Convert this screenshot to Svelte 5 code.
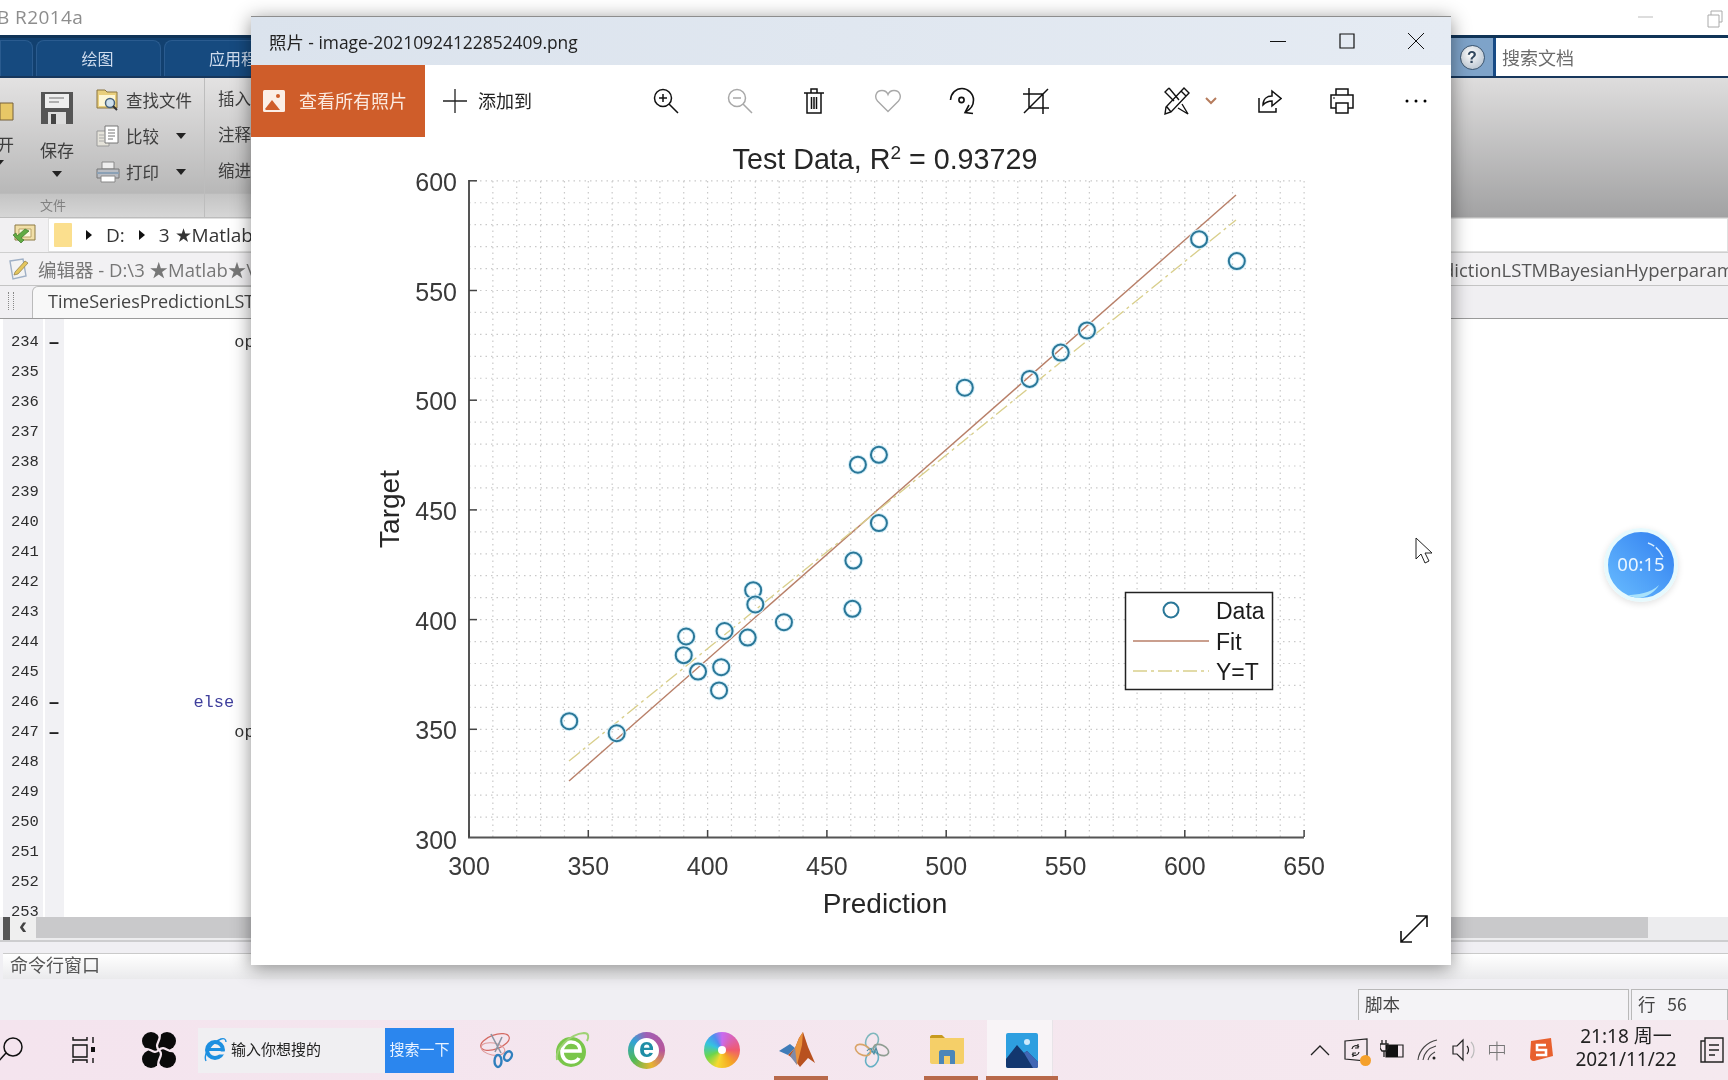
<script>
  // plot geometry, screen px of the photo
  const sx = (v) => 469 + (v - 300) * 2.386;
  const sy = (v) => 839 - (v - 300) * 2.194;

  const xMajor = [300, 350, 400, 450, 500, 550, 600, 650];
  const yMajor = [300, 350, 400, 450, 500, 550, 600];
  const xGrid = Array.from({ length: 35 }, (_, i) => 310 + i * 10);
  const yGrid = Array.from({ length: 30 }, (_, i) => 310 + i * 10);

  const points = [
    [342, 353.7], [361.9, 348.2], [390, 383.8], [391, 392.3], [396, 376.3], [404.8, 367.7],
    [405.7, 378.3], [407.1, 394.8], [416.8, 391.8], [419.1, 413.4], [420, 406.9], [432, 398.8],
    [460.7, 404.9], [461.1, 426.9], [471.8, 444], [463, 470.6], [471.8, 475.1], [507.8, 505.7],
    [535, 509.7], [548, 521.7], [559, 531.8], [606, 573.4], [621.8, 563.4]
  ];

  const lineNos = Array.from({ length: 20 }, (_, i) => 234 + i);
  const code = { 234: '                op', 246: '            else', 247: '                op' };
  const dashes = [234, 246, 247];
</script>

<div class="screen">
  <!-- matlab behind -->
  <div class="titlebar">
    <span class="apptitle">B R2014a</span>
    <svg class="minmax" width="90" height="20" viewBox="0 0 90 20">
      <path d="M2 9h15" stroke="#bbb" fill="none" />
      <path d="M72 7h11v12h-11zM75 7v-4h11v11h-3" stroke="#aaa" fill="none" />
    </svg>
  </div>

  <div class="tabs">
    <div class="tab first"></div>
    <div class="tab">绘图</div>
    <div class="tab wide">应用程序</div>
    <div class="help"><span class="helpball">?</span></div>
    <div class="docsearch">搜索文档</div>
  </div>

  <div class="ribbon">
    <div class="rgroup">
      <div class="rbody">
        <div class="opencol">
          <svg width="14" height="22" viewBox="0 0 14 22"><path d="M0 3h13v17H0z" fill="#e7c766" stroke="#77613a" /></svg>
          <span class="openlabel">开</span>
          <span class="caret cut"></span>
        </div>
        <div class="savecol">
          <svg width="34" height="34" viewBox="0 0 34 34">
            <path d="M1 1h32v32H1z" fill="#555" />
            <path d="M5 3h24v14H5z" fill="#eee" />
            <path d="M9 7h15M9 11h10" stroke="#999" stroke-width="1.5" />
            <path d="M8 21h18v12H8z" fill="#ddd" />
            <path d="M11 23h5v10h-5z" fill="#444" />
          </svg>
          <span>保存</span>
          <span class="caret"></span>
        </div>
        <div class="smallcol">
          <div class="smallitem">
            <svg width="24" height="24" viewBox="0 0 24 24">
              <path d="M1 2h8l2 2h10v16H1z" fill="#e9cf7c" stroke="#8a7440" />
              <path d="M3 7h16v11H3z" fill="#fdf6d6" />
              <circle cx="14" cy="15" r="4.5" fill="#cfe0ec" stroke="#48627a" stroke-width="1.5" />
              <path d="M17 18l4 4" stroke="#333" stroke-width="2" />
            </svg>
            <span>查找文件</span>
          </div>
          <div class="smallitem">
            <svg width="24" height="24" viewBox="0 0 24 24">
              <path d="M1 7h12v15H1z" fill="#e5e3da" stroke="#999" />
              <path d="M9 2h13v17H9z" fill="#fff" stroke="#777" />
              <path d="M12 6h7M12 9h7M12 12h7M12 15h5" stroke="#777" />
              <path d="M3 11h6M3 14h6M3 17h6" stroke="#aaa" />
            </svg>
            <span>比较</span><span class="caret side"></span>
          </div>
          <div class="smallitem">
            <svg width="24" height="24" viewBox="0 0 24 24">
              <path d="M6 2h12v7H6z" fill="#eee" stroke="#888" />
              <path d="M1 9h22v9H1z" fill="#b9bcc2" stroke="#777" />
              <path d="M5 16h14v6H5z" fill="#fff" stroke="#888" />
              <path d="M1 13h22" stroke="#8aa0b5" stroke-width="2" />
            </svg>
            <span>打印</span><span class="caret side"></span>
          </div>
        </div>
      </div>
      <div class="rlabel">文件</div>
    </div>
    <div class="rgroup second">
      <div class="rbody textcol">
        <span>插入</span>
        <span>注释</span>
        <span>缩进</span>
      </div>
      <div class="rlabel"></div>
    </div>
  </div>

  <div class="pathbar">
    <div class="pathtools">
      <svg width="26" height="24" viewBox="0 0 26 24">
        <path d="M4 3h20v15H4z" fill="#f1dfa8" stroke="#8d7a45" />
        <path d="M8 7h12v8H8z" fill="#fff8de" stroke="#b9a468" />
        <path d="M2 13l8 8 3-3-3-2 8-7-4-2-8 7-1-3z" fill="#62ab43" stroke="#3c7a2a" stroke-width=".7" />
      </svg>
    </div>
    <div class="pathbox">
      <span class="crumbfolder"></span>
      <span class="tri"></span><span>D:</span>
      <span class="tri"></span><span>3 ★Matlab★</span>
    </div>
  </div>

  <div class="edhead">
    <svg width="22" height="24" viewBox="0 0 22 24">
      <path d="M2 4l13-2 3 17-13 3z" fill="#f3f3f3" stroke="#9fb0c6" stroke-width="1.4" />
      <path d="M7 15l10-11 3 2-10 11-4 1z" fill="#e4c65e" stroke="#8d7a45" stroke-width=".7" />
    </svg>
    <span class="edtitle">编辑器 - D:\3 ★Matlab★\</span>
    <span class="edtail">dictionLSTMBayesianHyperparameterOptimization.m</span>
  </div>

  <div class="edtabs">
    <span class="grip"></span>
    <div class="edtab">TimeSeriesPredictionLSTMBayesianHyperparam.m</div>
  </div>

  <div class="editor">
    {#each lineNos as n}
      <div class="line">
        <span class="num">{n}</span>
        <span class="dash">{dashes.includes(n) ? '–' : ''}</span>
        <span class="code" class:kw={n === 246}>{code[n] ?? ''}</span>
      </div>
    {/each}
  </div>

  <div class="hscroll">
    <span class="hgrip"></span>
    <span class="harrow">‹</span>
    <span class="hthumb"></span>
  </div>

  <div class="cmdhead">命令行窗口</div>

  <div class="statusrow">
    <div class="statbox script">脚本</div>
    <div class="statbox row">行&nbsp;&nbsp;&nbsp;56</div>
  </div>

  <!-- windows taskbar -->
  <div class="taskbar">
    <svg class="tb-search" width="26" height="30" viewBox="0 0 26 30">
      <circle cx="13" cy="12" r="9" fill="none" stroke="#111" stroke-width="1.5" />
      <path d="M6 18L-4 29" stroke="#111" stroke-width="1.5" />
    </svg>
    <svg class="tb-view" width="24" height="28" viewBox="0 0 24 28">
      <path d="M1 1v3h14V1M1 9h14v12H1zM1 27v-3h14v3M21 1v6M21 22v5" fill="none" stroke="#111" stroke-width="1.4" />
      <rect x="19" y="11" width="4" height="5" fill="#111" />
    </svg>
    <svg class="tb-fan" width="34" height="36" viewBox="0 0 34 36">
      <circle cx="9" cy="9" r="9" /><circle cx="25" cy="9" r="9" />
      <circle cx="25" cy="27" r="9" /><circle cx="9" cy="27" r="9" />
      <rect x="6" y="6" width="22" height="24" />
      <g fill="none" stroke="#f4e4ee" stroke-width="2.2">
        <path d="M17 18C11 12 21 8 17 0" />
        <path d="M17 18C23 12 27 23 34 18" />
        <path d="M17 18C23 24 13 28 17 36" />
        <path d="M17 18C11 24 7 13 0 18" />
      </g>
    </svg>

    <div class="ie-box">
      <svg width="24" height="26" viewBox="0 0 24 26">
        <circle cx="12" cy="13" r="8" fill="none" stroke="#1c8fe0" stroke-width="4" />
        <path d="M4 12.5h17" stroke="#1c8fe0" stroke-width="3" />
        <path d="M14 17.5h10v-3h-10z" fill="#f0eff2" />
        <path d="M3 24C0 18 8 6 18 2c3-1 5 0 5 3" fill="none" stroke="#1c8fe0" stroke-width="1.4" />
      </svg>
      <span class="ie-hint">输入你想搜的</span>
      <span class="ie-btn"><span>搜索一下</span></span>
    </div>

    <div class="apps">
      <div class="app">
        <svg width="36" height="38" viewBox="0 0 36 38">
          <ellipse cx="16" cy="11" rx="15" ry="7" transform="rotate(-20 16 11)" fill="none" stroke="#d46a63" stroke-width="1.2" />
          <ellipse cx="14" cy="18" rx="12" ry="6" transform="rotate(10 14 18)" fill="none" stroke="#d99" stroke-width="1" />
          <path d="M12 3l10 19M23 6l-7 15" stroke="#8c95a3" stroke-width="1.6" />
          <ellipse cx="19" cy="30" rx="3.5" ry="6" fill="none" stroke="#2f7fbd" stroke-width="2.4" />
          <ellipse cx="29" cy="25" rx="3.5" ry="5" transform="rotate(30 29 25)" fill="none" stroke="#2f7fbd" stroke-width="2.4" />
        </svg>
      </div>
      <div class="app">
        <svg width="36" height="38" viewBox="0 0 36 38">
          <circle cx="17" cy="21" r="15" fill="#7ac64a" />
          <path d="M8 20h18c0-6-4-9-9-9s-9 4-9 10 4 10 9 10c4 0 7-2 8-4" fill="none" stroke="#fff" stroke-width="3.6" />
          <path d="M3 29C1 18 16 3 30 2c5 0 5 4 3 8" fill="none" stroke="#9fd274" stroke-width="2" />
        </svg>
      </div>
      <div class="app"><div class="ring"><span class="ringin">e</span></div></div>
      <div class="app"><div class="pinwheel"><span></span></div></div>
      <div class="app">
        <svg width="38" height="38" viewBox="0 0 38 38">
          <path d="M1 20l11-7 5 4-7 7z" fill="#3f7cb8" />
          <path d="M10 24l7-7 4-10 4-6 5 15 7 16-7-5-8 9-6-8z" fill="#b8511f" />
          <path d="M17 17l4-10 4-6-1 13-5 20-6-10z" fill="#e8913c" />
          <path d="M12 25l5-8 2 17z" fill="#7f8aa8" />
        </svg>
      </div>
      <div class="app">
        <svg width="36" height="36" viewBox="0 0 36 36" fill="none" stroke-width="1.6">
          <ellipse cx="18" cy="9" rx="6" ry="8" stroke="#7fb7bd" transform="rotate(25 18 9)" />
          <ellipse cx="27" cy="18" rx="8" ry="5" stroke="#8f9d92" transform="rotate(25 27 18)" />
          <ellipse cx="18" cy="27" rx="6" ry="8" stroke="#66b0c4" transform="rotate(25 18 27)" />
          <ellipse cx="9" cy="18" rx="8" ry="5" stroke="#d9a468" transform="rotate(25 9 18)" />
          <path d="M13 19c2-3 5-3 5 0l2 3 2-6 2 6" stroke="#4b8ba0" stroke-width="1.2" />
        </svg>
      </div>
      <div class="app">
        <svg width="36" height="30" viewBox="0 0 36 30">
          <path d="M1 2c0-1 1-2 2-2h10l3 3h-15z" fill="#c79a1f" />
          <path d="M1 3h34v24c0 1-1 2-2 2H3c-1 0-2-1-2-2z" fill="#f5cf68" />
          <path d="M10 29V17c0-1 1-2 2-2h12c1 0 2 1 2 2v12h-5v-8h-6v8z" fill="#4b86b8" />
        </svg>
      </div>
      <div class="app active">
        <svg width="32" height="35" viewBox="0 0 32 35">
          <rect width="32" height="35" rx="2" fill="#2e9fe0" />
          <circle cx="21" cy="9" r="3" fill="#cfeafc" />
          <path d="M0 33V26L11 12l7 8 3-2 11 11v4c0 1-1 2-2 2H2c-1 0-2-1-2-2z" fill="#13376f" />
          <path d="M18 20l3-2 11 11v4c0 1-1 2-2 2h-3z" fill="#4166b4" />
        </svg>
      </div>
    </div>

    <div class="tray">
      <div class="tr">
        <svg width="20" height="12" viewBox="0 0 20 12"><path d="M1 11l9-9 9 9" fill="none" stroke="#222" stroke-width="1.3" /></svg>
      </div>
      <div class="tr badge">
        <svg width="24" height="24" viewBox="0 0 24 24" fill="none" stroke="#222" stroke-width="1.2">
          <path d="M1 3l22-2v22l-22-2z" />
          <path d="M8 11a4 4 0 0 1 7-2M15 14a4 4 0 0 1-7 2M14 6v4h-3M9 19v-4h3" />
        </svg>
        <span class="dot"></span>
      </div>
      <div class="tr">
        <svg width="24" height="20" viewBox="0 0 24 20">
          <path d="M6 5h17v12H6z" fill="none" stroke="#222" stroke-width="1.2" />
          <path d="M6 5h12v12H6z" fill="#111" />
          <path d="M2 0v4M6 0v4M0 4h8v4l-2 3h-4l-2-3zM4 11v6" fill="none" stroke="#222" stroke-width="1.3" />
        </svg>
      </div>
      <div class="tr">
        <svg width="22" height="22" viewBox="0 0 22 22" fill="none" stroke="#444" stroke-width="1.1">
          <path d="M1 21C2 11 10 3 20 1M6 21c1-7 6-12 13-14M11 21c1-4 3-6 7-8" />
          <circle cx="17" cy="19" r="1.5" fill="#222" stroke="none" />
        </svg>
      </div>
      <div class="tr">
        <svg width="24" height="24" viewBox="0 0 24 24" fill="none" stroke="#222" stroke-width="1.2">
          <path d="M1 8h4l6-6v20l-6-6H1z" />
          <path d="M15 8c2 2 2 6 0 8" />
          <path d="M19 4c4 4 4 12 0 16" stroke="#bbb" />
        </svg>
      </div>
      <div class="tr ime">中</div>
      <div class="tr sogou">
        <svg width="26" height="26" viewBox="0 0 26 26">
          <path d="M3 4l20-3 2 18-19 5c-3 0-4-2-4-4z" fill="#e8602e" />
          <path d="M18 8H9v5h9v5H8" fill="none" stroke="#fff" stroke-width="2.6" />
        </svg>
      </div>
      <div class="clock">
        <span>21:18 周一</span>
        <span>2021/11/22</span>
      </div>
      <svg class="notify" width="24" height="26" viewBox="0 0 24 26" fill="none" stroke="#222" stroke-width="1.4">
        <path d="M5 1h18v24H5zM5 4H1v21h4M9 8h10M9 13h10M9 18h6" />
      </svg>
    </div>
  </div>

  <!-- photos window sits over matlab -->
  <div class="photos">
    <div class="ph-title">
      <span class="ph-name">照片 - image-20210924122852409.png</span>
      <div class="ph-winbtn">
        <svg width="16" height="16" viewBox="0 0 16 16"><path d="M0 8.5h16" stroke="#111" /></svg>
      </div>
      <div class="ph-winbtn">
        <svg width="16" height="16" viewBox="0 0 16 16"><path d="M1 1h14v14H1z" fill="none" stroke="#111" stroke-width="1.2" /></svg>
      </div>
      <div class="ph-winbtn">
        <svg width="16" height="16" viewBox="0 0 16 16"><path d="M0 0l16 16M16 0L0 16" stroke="#111" /></svg>
      </div>
    </div>

    <div class="ph-tools">
      <div class="ph-all">
        <svg width="22" height="22" viewBox="0 0 22 22">
          <rect width="22" height="22" rx="1.5" fill="#fbeee6" />
          <path d="M2 19l7-9 8 10H3z" fill="#cf5d2a" />
          <circle cx="15" cy="6" r="2" fill="#cf5d2a" />
        </svg>
        <span>查看所有照片</span>
      </div>
      <div class="ph-add">
        <svg width="24" height="24" viewBox="0 0 24 24"><path d="M12 0v24M0 12h24" stroke="#222" stroke-width="1.3" /></svg>
        <span>添加到</span>
      </div>

      <div class="ph-group">
        <button aria-label="放大">
          <svg width="26" height="26" viewBox="0 0 26 26" fill="none" stroke="#111" stroke-width="1.5">
            <circle cx="10" cy="10" r="8.5" /><path d="M16 16l9 9M6 10h8M10 6v8" />
          </svg>
        </button>
        <button aria-label="缩小">
          <svg width="26" height="26" viewBox="0 0 26 26" fill="none" stroke="#a8a8a8" stroke-width="1.5">
            <circle cx="10" cy="10" r="8.5" /><path d="M16 16l9 9M6 10h8" />
          </svg>
        </button>
        <button aria-label="删除">
          <svg width="20" height="26" viewBox="0 0 20 26" fill="none" stroke="#111" stroke-width="1.5">
            <path d="M0 5h20M7 5V1h6v4M3 5v20h14V5M7.5 9v12M10 9v12M12.5 9v12" />
          </svg>
        </button>
        <button aria-label="收藏">
          <svg width="26" height="24" viewBox="0 0 26 24" fill="none" stroke="#a8a8a8" stroke-width="1.4">
            <path d="M13 22.5L2.5 12C-1 8 1 1.5 7 1.5c3 0 5 1.5 6 4 1-2.5 3-4 6-4 6 0 8 6.5 4.5 10.5z" />
          </svg>
        </button>
        <button aria-label="旋转">
          <svg width="26" height="28" viewBox="0 0 26 28" fill="none" stroke="#111" stroke-width="1.6">
            <path d="M1.5 13C2 6 7 1.5 13 1.5S24.5 6.5 24.5 13c0 6-4 10-8 12" />
            <circle cx="12.5" cy="13" r="2.6" />
            <path d="M20 18l-4 7.5 8 1" />
          </svg>
        </button>
        <button aria-label="裁剪">
          <svg width="26" height="26" viewBox="0 0 26 26" fill="none" stroke="#111" stroke-width="1.5">
            <path d="M0 6h20v20M6 0v20h20M1 25L25 1" />
          </svg>
        </button>
      </div>

      <div class="ph-right">
        <div class="ph-edit">
          <svg width="26" height="28" viewBox="0 0 26 28" fill="none" stroke="#111" stroke-width="1.4">
            <path d="M5 1L1 5l9 9M15 13L5 1M18 17l6 10-10-6" />
            <path d="M20 1l5 5L7 25l-6 2 1-7zM3 20l4 5M17 4l5 5" />
          </svg>
          <svg width="14" height="10" viewBox="0 0 14 10"><path d="M2 2l5 5 5-5" fill="none" stroke="#b67c5d" stroke-width="2" /></svg>
        </div>
        <button class="share" aria-label="分享">
          <svg width="24" height="26" viewBox="0 0 24 26" fill="none" stroke="#111" stroke-width="1.5">
            <path d="M1 10v14h17v-4" />
            <path d="M5 17c0-6 4-9 9-9V3l9 7.5-9 7.5v-5c-4 0-6 1-9 4z" />
          </svg>
        </button>
        <button aria-label="打印">
          <svg width="24" height="26" viewBox="0 0 24 26" fill="none" stroke="#111" stroke-width="1.5">
            <path d="M6 7V1h12v6M6 20H1V7h22v13h-5M6 15h12v10H6z" />
            <path d="M3.5 10h1" stroke-width="2" />
          </svg>
        </button>
        <button aria-label="更多">
          <svg width="24" height="6" viewBox="0 0 24 6"><circle cx="3" cy="3" r="1.5" /><circle cx="12" cy="3" r="1.5" /><circle cx="21" cy="3" r="1.5" /></svg>
        </button>
      </div>
    </div>

    <div class="ph-view">
      <svg class="plot" width="1200" height="828" viewBox="251 137 1200 828">
        <g stroke="#c9c9c9" stroke-dasharray="1.5 4" stroke-width="1.2">
          {#each xGrid as v}
            <line x1={sx(v)} y1="181" x2={sx(v)} y2="837" />
          {/each}
          {#each yGrid as v}
            <line x1="469" y1={sy(v)} x2="1304" y2={sy(v)} />
          {/each}
        </g>

        <line x1="569" y1="781" x2="1236" y2="195" stroke="#b87f68" stroke-width="1.4" />
        <line x1="569" y1="761" x2="1236" y2="220" stroke="#d9cf8c" stroke-width="1.4" stroke-dasharray="14 4 3 4" />

        {#each points as p}
          <circle cx={sx(p[0])} cy={sy(p[1])} r="8" fill="none" stroke="#d5eef8" stroke-width="4" />
          <circle cx={sx(p[0])} cy={sy(p[1])} r="8" fill="none" stroke="#2a7798" stroke-width="2" />
        {/each}

        <path d="M469 180v657.500h835" fill="none" stroke="#555" stroke-width="2" />
        <g stroke="#444" stroke-width="1.5">
          {#each xMajor as v}
            <line x1={sx(v)} y1="837" x2={sx(v)} y2="830" />
          {/each}
          {#each yMajor.slice(1) as v}
            <line x1="469" y1={sy(v)} x2="477" y2={sy(v)} />
          {/each}
        </g>

        <g class="ticks">
          {#each xMajor as v}
            <text x={sx(v)} y="875" text-anchor="middle">{v}</text>
          {/each}
          {#each yMajor as v}
            <text x="457" y={sy(v) + 10} text-anchor="end">{v}</text>
          {/each}
        </g>

        <text class="label title" x="885" y="169" text-anchor="middle">Test Data, R<tspan dy="-10" font-size="19">2</tspan><tspan dy="10">&nbsp;= 0.93729</tspan></text>
        <text class="label" x="885" y="913" text-anchor="middle">Prediction</text>
        <text class="label" transform="translate(399 509) rotate(-90)" text-anchor="middle">Target</text>

        <rect x="1125.5" y="592.5" width="147" height="97" fill="#fff" stroke="#222" stroke-width="1.5" />
        <circle cx="1171" cy="610" r="7.5" fill="none" stroke="#2a7798" stroke-width="2" />
        <line x1="1133" y1="641" x2="1209" y2="641" stroke="#b87f68" stroke-width="1.4" />
        <line x1="1133" y1="671" x2="1209" y2="671" stroke="#d9cf8c" stroke-width="1.4" stroke-dasharray="14 4 3 4" />
        <g class="legend">
          <text x="1216" y="619">Data</text>
          <text x="1216" y="650">Fit</text>
          <text x="1216" y="680">Y=T</text>
        </g>
      </svg>

      <svg class="expand" width="30" height="30" viewBox="0 0 30 30" fill="none" stroke="#111" stroke-width="1.6">
        <path d="M2 28L28 2M17 2h11v11M2 17v11h11" />
      </svg>
    </div>
  </div>

  <!-- recorder timer -->
  <div class="timer">
    <svg class="timerfx" width="68" height="68" viewBox="0 0 68 68" fill="none">
      <path d="M41 12c6 2 11 6 15 14" stroke="#d8eeff" stroke-width="1.4" stroke-dasharray="7 2 20" />
      <path d="M20 64c10 0 24-2 32-10-3 6-12 13-22 13z" fill="#a8e2fb" stroke="none" />
    </svg>
    <span>00:15</span>
  </div>

  <svg class="cursor" width="20" height="28" viewBox="0 0 20 28">
    <path d="M1 1v21l5-5 4 9 4-2-4-8h7z" fill="#fff" stroke="#222" stroke-width="1" />
  </svg>
</div>

<style>
  :global(body) {
    background: #f0eff3;
  }

  .screen {
    position: relative;
    width: 1728px;
    height: 1080px;
    overflow: hidden;
    display: flex;
    flex-direction: column;
    background: #f0eff3;
    font-family: "Noto Sans CJK SC", "Noto Sans", sans-serif;
    color: #444;
    filter: blur(.35px);
  }

  svg {
    display: block;
    flex: none;
  }

  .titlebar {
    height: 35px;
    background: #fff;
    display: flex;
    align-items: center;
    flex: none;
  }
  .apptitle {
    margin-left: -3px;
    padding-bottom: 2px;
    font: 19px "Open Sans", sans-serif;
    color: #8d8d8d;
    letter-spacing: .4px;
  }
  .minmax {
    margin-left: auto;
    margin-right: 2px;
  }

  .tabs {
    height: 43px;
    flex: none;
    display: flex;
    background: #12406f;
    border-top: 3px solid #103457;
    border-bottom: 2px solid #17375c;
    box-sizing: border-box;
  }
  .tab {
    width: 125px;
    margin-right: 3px;
    margin-top: 2px;
    padding: 0 2px 2px 0;
    border-radius: 8px 8px 0 0;
    border: 1px solid #2a5b8f;
    border-bottom: 0;
    background: #164a7f;
    color: #cfdcee;
    font-size: 16px;
    display: flex;
    align-items: center;
    justify-content: center;
    box-sizing: border-box;
  }
  .tab.first {
    width: 33px;
    border-radius: 0 8px 0 0;
  }
  .tab.wide {
    width: 130px;
    justify-content: flex-start;
    padding-left: 44px;
    white-space: nowrap;
  }
  .help {
    margin-left: auto;
    width: 45px;
    background: #7ea3c9;
    border-right: 3px solid #174a85;
    box-sizing: border-box;
    display: flex;
    align-items: center;
    justify-content: center;
  }
  .helpball {
    width: 23px;
    height: 23px;
    border-radius: 50%;
    background: radial-gradient(circle at 40% 35%, #fff, #a9b7c6);
    border: 1.5px solid #3b556f;
    color: #31475e;
    font: bold 16px/23px "Liberation Sans", sans-serif;
    text-align: center;
  }
  .docsearch {
    width: 232px;
    box-sizing: border-box;
    background: #fff;
    font-size: 18px;
    color: #6b6b6b;
    padding-left: 6px;
    display: flex;
    align-items: center;
  }

  .ribbon {
    height: 140px;
    flex: none;
    display: flex;
    background: linear-gradient(#dedddd, #a2a2a3);
    border-bottom: 1px solid #bcbcbc;
    box-sizing: border-box;
  }
  .rgroup {
    width: 205px;
    flex: none;
    display: flex;
    flex-direction: column;
    border-right: 1px solid #bdbdbd;
    box-sizing: border-box;
    background: linear-gradient(#e3e2e2, #afafaf);
  }
  .rgroup.second {
    width: 230px;
  }
  .rbody {
    flex: 1;
    display: flex;
    min-height: 0;
    font-size: 16.5px;
    color: #3e3e3e;
  }
  .rlabel {
    height: 23px;
    padding-left: 40px;
    background: linear-gradient(#c4c4c4, #d6d6d6);
    border-top: 1px solid #bbb;
    font-size: 13px;
    line-height: 22px;
    color: #808080;
  }
  .opencol {
    width: 14px;
    padding-top: 22px;
    display: flex;
    flex-direction: column;
    gap: 11px;
    overflow: hidden;
    font-size: 17px;
  }
  .openlabel {
    margin-left: -3px;
    line-height: 22px;
  }
  .savecol {
    margin-left: 19px;
    width: 48px;
    padding-top: 13px;
    display: flex;
    flex-direction: column;
    align-items: center;
    font-size: 17px;
  }
  .savecol span:nth-child(2) {
    margin-top: 12px;
    line-height: 26px;
  }
  .caret {
    display: block;
    width: 0;
    height: 0;
    border: 5.5px solid transparent;
    border-top: 6px solid #222;
    border-bottom: 0;
    margin-top: 8px;
  }
  .caret.cut {
    margin: -6px 0 0 -6px;
  }
  .caret.side {
    margin: 0 6px 0 auto;
  }
  .smallcol {
    margin-left: 15px;
    width: 96px;
    padding-top: 9px;
    display: flex;
    flex-direction: column;
    gap: 10px;
  }
  .smallitem {
    height: 26px;
    display: flex;
    align-items: center;
    gap: 6px;
    white-space: nowrap;
  }
  .textcol {
    flex-direction: column;
    padding: 8px 0 0 13px;
    gap: 12px;
    line-height: 24px;
  }

  .pathbar {
    height: 35px;
    flex: none;
    display: flex;
    background: #f1f0f2;
    box-sizing: border-box;
    border-bottom: 1px solid #cfcfcf;
  }
  .pathtools {
    width: 48px;
    padding: 4px 0 0 11px;
    box-sizing: border-box;
  }
  .pathbox {
    flex: 1;
    background: #fff;
    border: 1px solid #e0e0e0;
    display: flex;
    align-items: center;
    gap: 14px;
    padding-left: 5px;
    font: 19px "Open Sans", sans-serif;
    color: #333;
  }
  .crumbfolder {
    width: 18px;
    height: 24px;
    background: #fbdf8e;
    border-radius: 1px;
  }
  .tri {
    width: 0;
    height: 0;
    border-left: 6px solid #111;
    border-top: 5px solid transparent;
    border-bottom: 5px solid transparent;
  }

  .edhead {
    height: 32px;
    flex: none;
    display: flex;
    align-items: center;
    padding-left: 8px;
    background: #f2f1f3;
    font-size: 18px;
    color: #777;
    white-space: nowrap;
    overflow: hidden;
    box-sizing: border-box;
  }
  .edtitle {
    margin-left: 8px;
    width: 1405px;
    flex: none;
    font-family: "Open Sans", "Noto Sans CJK SC", sans-serif;
    font-size: 18.5px;
  }
  .edtail {
    color: #555;
    font-family: "Open Sans", sans-serif;
    font-size: 18.5px;
  }

  .edtabs {
    height: 34px;
    flex: none;
    display: flex;
    background: #f0eff2;
    border-top: 1px solid #c4c4c4;
    border-bottom: 1px solid #9a9a9a;
    box-sizing: border-box;
    overflow: hidden;
  }
  .grip {
    width: 4px;
    margin: 6px 18px 8px 8px;
    border-left: 1px dotted #888;
    border-right: 1px dotted #888;
  }
  .edtab {
    width: 600px;
    padding-left: 15px;
    background: #f8f8f8;
    border: 1px solid #bbb;
    border-radius: 6px 0 0 0;
    border-bottom: 0;
    font: 18px "Open Sans", sans-serif;
    color: #444;
    line-height: 29px;
    white-space: nowrap;
    overflow: hidden;
  }

  .editor {
    height: 598px;
    flex: none;
    overflow: hidden;
    padding-top: 8px;
    box-sizing: border-box;
    background: linear-gradient(90deg, #fff 3px, #f1f1f4 3px, #f1f1f4 43px, #fff 43px, #fff 45px, #f1f1f4 45px, #f1f1f4 64px, #fff 64px);
    font-family: "Liberation Mono", monospace;
  }
  .line {
    height: 30px;
    flex: none;
    display: flex;
    align-items: center;
  }
  .num {
    margin-left: 11px;
    width: 35px;
    font-size: 15.5px;
    color: #2c2c2c;
  }
  .dash {
    width: 25px;
    font: bold 18px "Liberation Sans", sans-serif;
    padding-left: 3px;
    box-sizing: border-box;
    color: #222;
  }
  .code {
    white-space: pre;
    font-size: 17px;
    color: #333;
  }
  .code.kw {
    color: #3f3f9c;
  }

  .hscroll {
    height: 25px;
    flex: none;
    display: flex;
    background: #ececee;
    padding-left: 3px;
    border-bottom: 2px solid #cdcdcf;
    box-sizing: border-box;
  }
  .hgrip {
    width: 7px;
    background: #555;
  }
  .harrow {
    width: 26px;
    background: #efefef;
    text-align: center;
    font: bold 24px/18px "Liberation Sans", sans-serif;
    color: #444;
  }
  .hthumb {
    width: 1612px;
    background: #c9c9cb;
    margin-bottom: 2px;
  }

  .cmdhead {
    height: 25px;
    flex: none;
    margin-top: 11px;
    margin-left: 3px;
    padding-left: 7px;
    border-top: 1px solid #cacaca;
    background: linear-gradient(#fff, #eaeaec);
    font-size: 18px;
    line-height: 21px;
    color: #555;
  }

  .statusrow {
    flex: 1;
    display: flex;
    align-items: flex-end;
    padding-left: 1358px;
    gap: 2px;
  }
  .statbox {
    height: 31px;
    border: 1px solid #b9b9b9;
    border-bottom: 0;
    box-sizing: border-box;
    font-size: 17.5px;
    line-height: 27px;
    color: #444;
    padding-left: 6px;
    background: #f4f3f6;
  }
  .statbox.script {
    width: 271px;
  }
  .statbox.row {
    flex: 1;
    white-space: nowrap;
  }

  .taskbar {
    height: 60px;
    flex: none;
    display: flex;
    align-items: center;
    background: linear-gradient(90deg, #f4e4ee, #f5e9ef);
  }
  .tb-search {
    overflow: visible;
  }
  .tb-view {
    margin-left: 46px;
  }
  .tb-fan {
    margin-left: 46px;
    fill: #0a0a0a;
  }
  .ie-box {
    margin-left: 22px;
    width: 256px;
    height: 45px;
    flex: none;
    display: flex;
    align-items: center;
    background: #f0eff2;
    font-size: 15px;
    color: #222;
    padding-left: 5px;
    box-sizing: border-box;
    overflow: hidden;
  }
  .ie-hint {
    margin-left: 4px;
    width: 154px;
    padding-bottom: 3px;
    white-space: nowrap;
  }
  .ie-btn {
    width: 69px;
    height: 45px;
    padding-bottom: 3px;
    box-sizing: border-box;
    background: #2b86ee;
    color: #eaf3ff;
    display: flex;
    align-items: center;
    justify-content: center;
    white-space: nowrap;
  }

  .apps {
    margin-left: 5px;
    display: flex;
    height: 60px;
  }
  .app {
    width: 75px;
    height: 60px;
    display: flex;
    align-items: center;
    justify-content: center;
    position: relative;
  }
  .app:nth-child(5)::after,
  .app:nth-child(7)::after {
    content: "";
    position: absolute;
    left: 15px;
    right: 6px;
    bottom: 0;
    height: 4px;
    background: #b8694a;
  }
  .app.active {
    width: 66px;
    margin-left: 3px;
    padding-left: 4px;
    box-sizing: border-box;
    background: #f8f4f7;
    border-right: 1px solid #e8e4e8;
  }
  .app.active::after {
    content: "";
    position: absolute;
    left: -1px;
    right: -6px;
    bottom: 0;
    height: 4px;
    background: #b8694a;
  }
  .ring {
    width: 37px;
    height: 37px;
    border-radius: 50%;
    background: conic-gradient(#a05fb5, #b7569a 25%, #e8b52f 45%, #4fb958 65%, #32a3d6 85%, #a05fb5);
    display: flex;
    align-items: center;
    justify-content: center;
  }
  .ringin {
    width: 25px;
    height: 25px;
    border-radius: 50%;
    background: #fff;
    color: #1f8ea6;
    font: bold 27px/21px "Liberation Sans", sans-serif;
    text-align: center;
  }
  .pinwheel {
    width: 36px;
    height: 36px;
    border-radius: 50%;
    background: conic-gradient(#c86bf0, #f05a6e 25%, #f5a623 40%, #f6d92f 55%, #6dd64a 68%, #34c3e0 82%, #4f8ef0 92%, #c86bf0);
    display: flex;
    align-items: center;
    justify-content: center;
  }
  .pinwheel span {
    width: 8px;
    height: 8px;
    border-radius: 50%;
    background: #fff;
  }

  .tray {
    margin-left: auto;
    display: flex;
    align-items: center;
    height: 60px;
    color: #222;
  }
  .tr {
    width: 36px;
    display: flex;
    justify-content: center;
    position: relative;
  }
  .badge .dot {
    position: absolute;
    right: 3px;
    bottom: -4px;
    width: 11px;
    height: 11px;
    border-radius: 50%;
    background: #f5a02a;
  }
  .ime {
    width: 30px;
    margin-right: 4px;
    font-size: 20px;
    color: #777;
    font-weight: 300;
  }
  .sogou {
    margin-left: 7px;
  }
  .clock {
    width: 120px;
    margin-left: 7px;
    padding-bottom: 4px;
    display: flex;
    flex-direction: column;
    align-items: center;
    font: 19px/23px "Noto Sans", "Noto Sans CJK SC", sans-serif;
    color: #222;
  }
  .notify {
    margin: 0 4px 0 14px;
  }

  .photos {
    position: absolute;
    left: 251px;
    top: 16px;
    width: 1200px;
    height: 949px;
    display: flex;
    flex-direction: column;
    background: #fff;
    border-top: 1px solid #8d8d8d;
    box-sizing: border-box;
    box-shadow: 0 3px 18px rgba(0, 0, 0, .45);
  }
  .ph-title {
    height: 48px;
    flex: none;
    display: flex;
    align-items: center;
    padding-right: 1px;
    background: linear-gradient(90deg, #dbe3ed, #e5ebf3);
  }
  .ph-name {
    margin-left: 18px;
    margin-right: auto;
    font: 17.4px "Open Sans", "Noto Sans CJK SC", sans-serif;
    color: #222;
  }
  .ph-winbtn {
    width: 69px;
    display: flex;
    justify-content: center;
  }
  .ph-tools {
    height: 72px;
    flex: none;
    display: flex;
    align-items: center;
  }
  .ph-all {
    width: 174px;
    height: 72px;
    flex: none;
    display: flex;
    align-items: center;
    gap: 14px;
    padding-left: 12px;
    box-sizing: border-box;
    background: #cf5d2a;
    color: #fbe9df;
    font-size: 18px;
    white-space: nowrap;
  }
  .ph-all span,
  .ph-add span {
    padding-bottom: 2px;
  }
  .ph-add {
    margin-left: 18px;
    width: 150px;
    display: flex;
    align-items: center;
    gap: 11px;
    font-size: 18px;
    color: #222;
  }
  .ph-tools button {
    width: 74px;
    height: 72px;
    flex: none;
    background: none;
    border: 0;
    padding: 0;
    display: flex;
    align-items: center;
    justify-content: center;
  }
  .ph-tools button.share {
    width: 70px;
  }
  .ph-group {
    margin-left: 36px;
    display: flex;
  }
  .ph-right {
    margin-left: auto;
    margin-right: -2px;
    display: flex;
    align-items: center;
  }
  .ph-edit {
    width: 82px;
    display: flex;
    align-items: center;
    gap: 14px;
    padding-left: 11px;
    box-sizing: border-box;
  }
  .ph-view {
    flex: 1;
    position: relative;
  }
  .ticks text {
    font: 25px "Liberation Sans", sans-serif;
    fill: #3a3a3a;
  }
  .label {
    font: 28px "Liberation Sans", sans-serif;
    fill: #262626;
  }
  .label.title {
    font-size: 28.7px;
  }
  .legend text {
    font: 23px "Liberation Sans", sans-serif;
    fill: #1c1c1c;
  }
  .expand {
    position: absolute;
    right: 22px;
    bottom: 21px;
  }

  .timer {
    position: absolute;
    left: 1604px;
    top: 528px;
    width: 74px;
    height: 74px;
    border-radius: 50%;
    box-sizing: border-box;
    background: linear-gradient(225deg, #2f7def, #69bdff);
    border: 4px solid #e6f9fd;
    box-shadow: 0 2px 7px rgba(0, 0, 0, .12);
    color: #eaf6ff;
    font: 18.5px/64px "Noto Sans", sans-serif;
    text-align: center;
  }
  .timerfx {
    position: absolute;
    left: -1px;
    top: -1px;
  }
  .cursor {
    position: absolute;
    left: 1415px;
    top: 537px;
  }
</style>
